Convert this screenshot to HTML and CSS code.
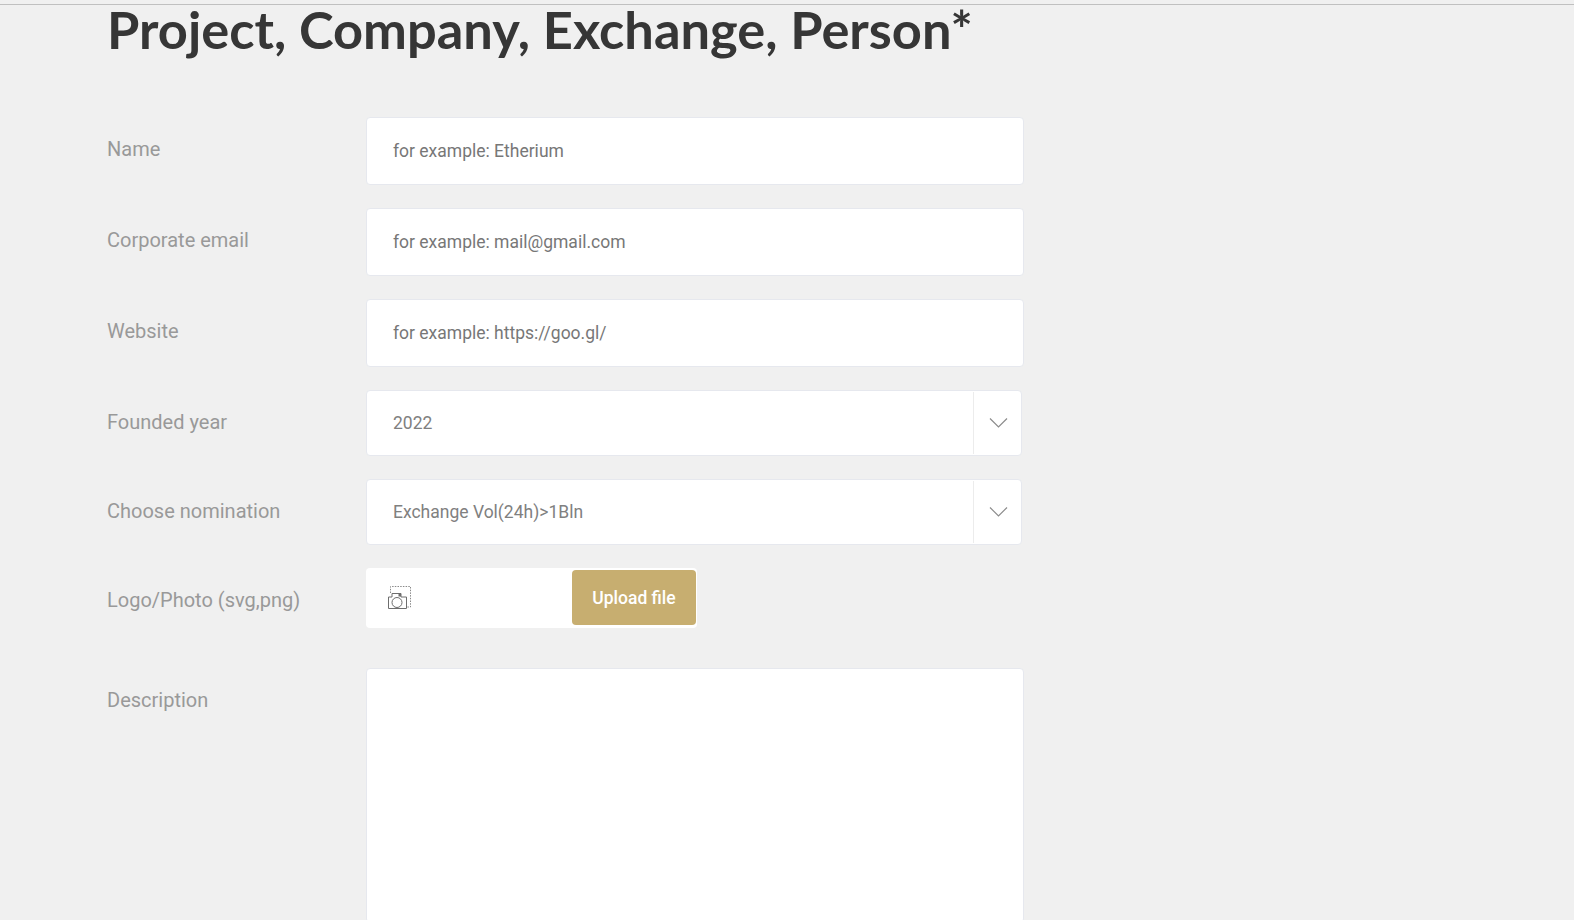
FILE: index.html
```html
<!DOCTYPE html>
<html lang="en">
<head>
    <meta charset="UTF-8" />
    <meta name="viewport" content="width=device-width, initial-scale=1.0" />
    <link rel="stylesheet" href="styles.css">
</head>
<body>
    <div class="top-line"></div>
    <div class="page">
        <h1 class="page-title">Project, Company, Exchange, Person*</h1>

        <form class="nominee-form">
            <div class="form-row">
                <label class="form-label">Name</label>
                <div class="text-input">for example: Etherium</div>
            </div>
            <div class="form-row">
                <label class="form-label">Corporate email</label>
                <div class="text-input">for example: mail@gmail.com</div>
            </div>
            <div class="form-row">
                <label class="form-label">Website</label>
                <div class="text-input">for example: https://goo.gl/</div>
            </div>
            <div class="form-row">
                <label class="form-label">Founded year</label>
                <div class="select-box">
                    <span class="select-value">2022</span>
                    <span class="select-arrow">
                        <svg width="20" height="12" viewBox="0 0 20 12"><path d="M2 1.5 L10.5 10 L19 1.5" fill="none" stroke="#8c8c8c" stroke-width="1.2"/></svg>
                    </span>
                </div>
            </div>
            <div class="form-row">
                <label class="form-label">Choose nomination</label>
                <div class="select-box">
                    <span class="select-value">Exchange Vol(24h)&gt;1Bln</span>
                    <span class="select-arrow">
                        <svg width="20" height="12" viewBox="0 0 20 12"><path d="M2 1.5 L10.5 10 L19 1.5" fill="none" stroke="#8c8c8c" stroke-width="1.2"/></svg>
                    </span>
                </div>
            </div>
            <div class="form-row row-upload">
                <label class="form-label">Logo/Photo (svg,png)</label>
                <div class="upload-box">
                    <svg class="upload-icon" width="23" height="23" viewBox="0 0 23 23">
                        <path d="M2.5 7 V0.5 H22.5 V21 H18.5" fill="none" stroke="#8a8a8a" stroke-width="1" stroke-dasharray="1.5 1.2"/>
                        <path d="M0.5 11 H4 V7.5 H13 V11 H18.5 V22.5 H0.5 Z" fill="#fff" stroke="#6e6e6e" stroke-width="1"/>
                        <circle cx="9" cy="16.5" r="5" fill="#fff" stroke="#6e6e6e" stroke-width="1"/>
                        <rect x="10.5" y="8" width="2.5" height="2.5" fill="#6e6e6e"/>
                    </svg>
                    <button type="button" class="upload-button">Upload file</button>
                </div>
            </div>
            <div class="form-row">
                <label class="form-label">Description</label>
                <div class="text-area"></div>
            </div>
        </form>
    </div>
</body>
</html>
```

FILE: styles.css
```css
html, body {
    height: 100%;
    overflow: hidden;
}
body {
    margin: 0;
    background-color: #f0f0f0;
    font-family: Roboto, sans-serif;
}
.top-line {
    height: 1px;
    margin-top: 4px;
    background-color: #c0c0c0;
}
.page {
    padding-left: 107px;
}
.page-title {
    margin: 0;
    height: 112px;
    font-family: Lato, sans-serif;
    font-weight: 700;
    font-size: 52.4px;
    line-height: 47px;
    color: #363636;
}
.nominee-form {
    display: flex;
    flex-direction: column;
    gap: 23px;
}
.form-row {
    display: flex;
    align-items: flex-start;
}
.form-label {
    width: 259px;
    flex-shrink: 0;
    padding-top: 20px;
    font-size: 20px;
    line-height: 24px;
    color: #999;
}
.text-input {
    box-sizing: border-box;
    width: 658px;
    height: 68px;
    padding: 0 26px;
    display: flex;
    align-items: center;
    background-color: #fff;
    border: 1px solid #e6e8ee;
    border-radius: 4px;
    font-size: 17.5px;
    color: #777;
}
.select-box {
    box-sizing: border-box;
    width: 656px;
    height: 66px;
    display: flex;
    background-color: #fff;
    border: 1px solid #e6e8ee;
    border-radius: 4px;
    font-size: 17.5px;
    color: #808080;
}
.select-value {
    flex: 1;
    padding: 0 26px;
    display: flex;
    align-items: center;
}
.select-arrow {
    width: 47px;
    margin: 1px 0;
    display: flex;
    align-items: center;
    justify-content: center;
    border-left: 1px solid #ececec;
}
.row-upload {
    margin-bottom: 17px;
}
.upload-box {
    box-sizing: border-box;
    width: 331px;
    height: 60px;
    padding: 2px 1px 3px 22px;
    display: flex;
    align-items: center;
    justify-content: space-between;
    background-color: #fff;
    border-radius: 4px;
}
.upload-button {
    width: 124px;
    height: 55px;
    padding: 0;
    border: none;
    border-radius: 4px;
    background-color: #c7ae70;
    color: #fff;
    font-family: Roboto, sans-serif;
    font-weight: 500;
    font-size: 17.5px;
}
.text-area {
    box-sizing: border-box;
    width: 658px;
    height: 255px;
    background-color: #fff;
    border: 1px solid #e6e8ee;
    border-radius: 4px;
}
```
